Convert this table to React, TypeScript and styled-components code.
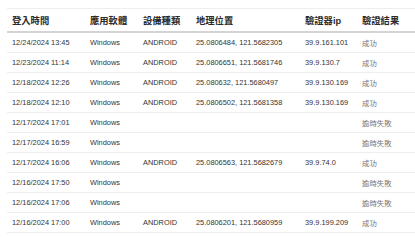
import React from "react";
import styled, { createGlobalStyle } from "styled-components";

const GlobalStyle = createGlobalStyle`
  html, body {
    margin: 0;
    padding: 0;
    background: #fff;
  }
  body {
    font-family: "Liberation Sans", Arial, "Noto Sans CJK TC", sans-serif;
  }
`;

const Wrapper = styled.div`
  padding: 8px 0 0 7px;
`;

const Table = styled.table`
  width: 408px;
  border-collapse: collapse;
  table-layout: fixed;
  border-top: 1px solid #eeeeee;
`;

const HeadCell = styled.th<{ $w: number }>`
  width: ${(p) => p.$w - 5}px;
  height: 22px;
  padding: 0 0 0 5px;
  text-align: left;
  font-size: 9.3px;
  font-weight: 600;
  color: #2b2b2b;
  border-bottom: 2px solid #d4d4d4;
  white-space: nowrap;
`;

const Cell = styled.td<{ $muted?: boolean }>`
  height: 19px;
  padding: 0 0 0 5px;
  font-size: 7.4px;
  color: ${(p) => (p.$muted ? "#777" : "#333")};
  border-bottom: 1px solid #eeeeee;
  white-space: nowrap;
  overflow: hidden;
`;

const columns = [
  { title: "登入時間", w: 78 },
  { title: "應用軟體", w: 53 },
  { title: "設備種類", w: 53 },
  { title: "地理位置", w: 109 },
  { title: "驗證器ip", w: 57 },
  { title: "驗證結果", w: 58 },
];

const rows = [
  ["12/24/2024 13:45", "Windows", "ANDROID", "25.0806484, 121.5682305", "39.9.161.101", "成功"],
  ["12/23/2024 11:14", "Windows", "ANDROID", "25.0806651, 121.5681746", "39.9.130.7", "成功"],
  ["12/18/2024 12:26", "Windows", "ANDROID", "25.080632, 121.5680497", "39.9.130.169", "成功"],
  ["12/18/2024 12:10", "Windows", "ANDROID", "25.0806502, 121.5681358", "39.9.130.169", "成功"],
  ["12/17/2024 17:01", "Windows", "", "", "", "逾時失敗"],
  ["12/17/2024 16:59", "Windows", "", "", "", "逾時失敗"],
  ["12/17/2024 16:06", "Windows", "ANDROID", "25.0806563, 121.5682679", "39.9.74.0", "成功"],
  ["12/16/2024 17:50", "Windows", "", "", "", "逾時失敗"],
  ["12/16/2024 17:06", "Windows", "", "", "", "逾時失敗"],
  ["12/16/2024 17:00", "Windows", "ANDROID", "25.0806201, 121.5680959", "39.9.199.209", "成功"],
];

export default function App() {
  return (
    <>
      <GlobalStyle />
      <Wrapper>
        <Table>
          <thead>
            <tr>
              {columns.map((c) => (
                <HeadCell key={c.title} $w={c.w}>
                  {c.title}
                </HeadCell>
              ))}
            </tr>
          </thead>
          <tbody>
            {rows.map((r, i) => (
              <tr key={i}>
                {r.map((v, j) => (
                  <Cell key={j} $muted={j === 5}>
                    {v}
                  </Cell>
                ))}
              </tr>
            ))}
          </tbody>
        </Table>
      </Wrapper>
    </>
  );
}
